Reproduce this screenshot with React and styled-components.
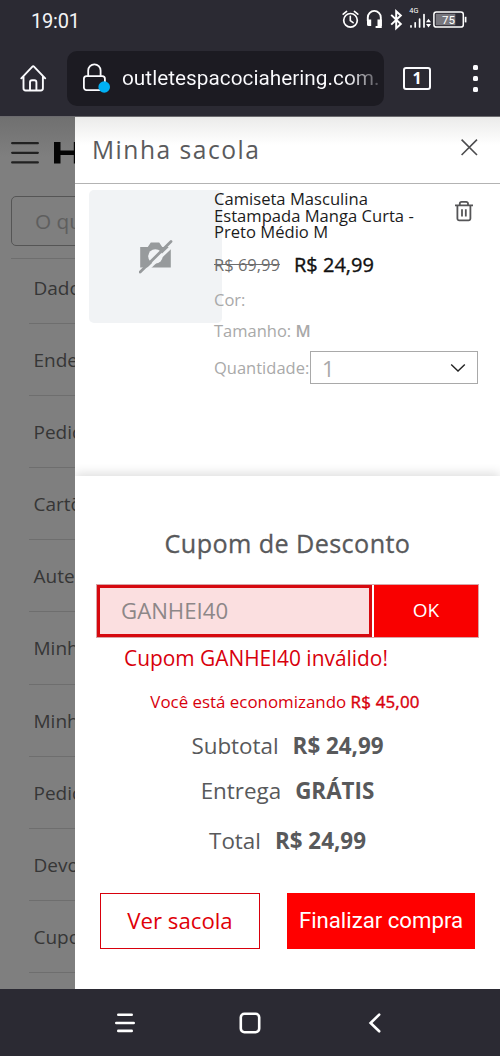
import React from "react"
import styled, { createGlobalStyle, css } from "styled-components"

const MENU = ["Dados", "Endereços", "Pedidos", "Cartões", "Autenticação", "Minha sacola", "Minhas listas", "Pedidos", "Devoluções", "Cupons"]

const TOTALS = [
  { label: "Subtotal", value: "R$ 24,99", height: 44 },
  { label: "Entrega", value: "GRÁTIS", height: 46 },
  { label: "Total", value: "R$ 24,99", height: 54 },
]

function StatusIcons() {
  return (
    <svg width="132" height="34" viewBox="340 4 132 34" fill="none" stroke="#fff" strokeLinecap="round">
      <circle cx="350.5" cy="20.3" r="6.8" strokeWidth="1.7" />
      <path d="M350.3 16.3v4.4l2.8 2M343.2 14.2l3.4-2.8M357.8 14.2l-3.4-2.8" strokeWidth="1.6" />
      <path d="M367.8 21v-3.6a6.5 6.5 0 0 1 13 0V27h-5.2" strokeWidth="1.9" strokeLinecap="butt" />
      <path d="M367 19.5h4.2v6.6h-2.6a1.6 1.6 0 0 1-1.6-1.6zM377.5 19.5h4.3v6.6h-4.3z" fill="#fff" stroke="none" />
      <path d="M391.2 14.9l9.6 9.2-4.6 4.2V11.2l4.6 4.2-9.6 9.2" strokeWidth="2" strokeLinecap="butt" strokeLinejoin="miter" />
      <path d="M411 25.8v1.2M415.2 22.8v4.2M419.6 19.2v7.8M424 14.6v12.4" strokeWidth="1.7" />
      <path d="M426 22.2l2.5-3.4 2.5 3.4zM426 24l2.5 3.4 2.5-3.4z" fill="#fff" stroke="none" />
      <rect x="433.9" y="11.9" width="29.4" height="15.2" rx="2.4" strokeWidth="1.5" />
      <rect x="435.8" y="13.8" width="19.5" height="11.4" fill="#77767d" stroke="none" />
      <path d="M465.6 16.8v5.6" strokeWidth="1.7" strokeLinecap="butt" />
      <text x="409.3" y="12.8" fill="#fff" stroke="none" fontSize="7.4" fontFamily="Roboto, sans-serif">4G</text>
      <text x="442" y="24" fill="#fff" stroke="none" fontSize="11.5" fontFamily="Roboto, sans-serif">75</text>
    </svg>
  )
}

function HomeIcon() {
  return (
    <svg width="28" height="28" viewBox="0 0 28 28" fill="none" stroke="#fbfbfe" strokeWidth="1.9" strokeLinecap="round" strokeLinejoin="round">
      <path d="M1.3 14.3L12.4 2.6a1.1 1.1 0 0 1 1.6 0l11.2 11.7M3.5 12.5v11.8a2.2 2.2 0 0 0 2.2 2.2h15a2.2 2.2 0 0 0 2.2-2.2V12.5M10 26.3v-8a2 2 0 0 1 2-2h2.4a2 2 0 0 1 2 2v8" />
    </svg>
  )
}

function LockIcon() {
  return (
    <svg width="30" height="32" viewBox="0 0 30 32" fill="none">
      <rect x="1.9" y="14.2" width="21" height="14" rx="2.6" stroke="#fbfbfe" strokeWidth="1.8" />
      <path d="M6.2 14V8.6a6.2 6.2 0 0 1 12.4 0V14" stroke="#fbfbfe" strokeWidth="1.8" />
      <circle cx="22.2" cy="25" r="5.8" fill="#00b0f4" />
    </svg>
  )
}

function NoPhotoIcon() {
  return (
    <svg width="34" height="34" viewBox="0 0 34 34">
      <path d="M1.2 7h7.6l3-4.6h8.4l3 4.6h8.6v20.5H1.2z" fill="#979a9c" />
      <circle cx="16.4" cy="16.4" r="7.2" fill="#f1f3f5" />
      <path d="M3.6 34.2L36 3.2" stroke="#f1f3f5" strokeWidth="3" />
      <path d="M1.2 32L32 1.6" stroke="#979a9c" strokeWidth="2.8" strokeLinecap="round" />
    </svg>
  )
}

function TrashIcon() {
  return (
    <svg width="20" height="22" viewBox="0 0 20 22" fill="none" stroke="#555557" strokeWidth="1.8">
      <path d="M1 5.4h18M3.4 5.4v13.2a1.8 1.8 0 0 0 1.8 1.8h9.4a1.8 1.8 0 0 0 1.8-1.8V5.4M5.8 5.2V3.6a1.8 1.8 0 0 1 1.8-1.8h4.6A1.8 1.8 0 0 1 14 3.6v1.6M8 9.2v7.2M11.8 9.2v7.2" />
    </svg>
  )
}

export default function App() {
  return (
    <Screen>
      <GlobalStyle />
      <StatusBar>
        <Clock>19:01</Clock>
        <StatusIcons />
      </StatusBar>
      <Toolbar>
        <HomeIcon />
        <AddressBar>
          <LockIcon />
          <Address>outletespacociahering.com.</Address>
        </AddressBar>
        <TabCount>1</TabCount>
        <More><i /><i /><i /></More>
      </Toolbar>
      <Content>
        <Account>
          <AccountTop>
            <svg width="64" height="24" viewBox="0 0 64 24">
              <path d="M1.2 2.2h25.6M1.2 11.8h25.6M1.2 21.4h25.6" stroke="#212121" strokeWidth="2.3" strokeLinecap="round" />
              <path d="M43 1h6.5v8.4h13.3V1H64v21.6h-1.2V14H49.5v8.6H43z" fill="#050505" />
            </svg>
          </AccountTop>
          <Search>O que você procura?</Search>
          <Menu>
            {MENU.map((item, i) => <MenuItem key={i}>{item}</MenuItem>)}
          </Menu>
        </Account>
        <Drawer>
          <DrawerHeader>
            <h2>Minha sacola</h2>
            <svg width="18" height="18" viewBox="0 0 18 18" stroke="#4c4c4e" strokeWidth="1.6">
              <path d="M1.6 1.6l15.4 15.4M17 1.6L1.6 17" />
            </svg>
          </DrawerHeader>
          <Product>
            <Thumb><NoPhotoIcon /></Thumb>
            <Details>
              <Name>Camiseta Masculina<br />Estampada Manga Curta -<br />Preto Médio M</Name>
              <Prices>
                <OldPrice>R$ 69,99</OldPrice>
                <Price>R$ 24,99</Price>
              </Prices>
              <Attribute>Cor:</Attribute>
              <Attribute>Tamanho: <b>M</b></Attribute>
              <Quantity>
                <span>Quantidade:</span>
                <Select>
                  1
                  <svg width="16" height="10" viewBox="0 0 16 10" fill="none" stroke="#222" strokeWidth="1.4">
                    <path d="M1.2 1.5L8 8l6.8-6.5" />
                  </svg>
                </Select>
              </Quantity>
            </Details>
            <TrashIcon />
          </Product>
          <Summary>
            <CouponTitle>Cupom de Desconto</CouponTitle>
            <Coupon>
              <CouponInput>GANHEI40</CouponInput>
              <CouponButton>OK</CouponButton>
            </Coupon>
            <CouponError>Cupom GANHEI40 inválido!</CouponError>
            <Saving>Você está economizando <b>R$ 45,00</b></Saving>
            {TOTALS.map(({ label, value, height }) =>
              <Total key={label} $height={height}>
                <span>{label}</span>
                <strong>{value}</strong>
              </Total>
            )}
            <Actions>
              <ViewBag>Ver sacola</ViewBag>
              <Checkout>Finalizar compra</Checkout>
            </Actions>
          </Summary>
        </Drawer>
      </Content>
      <NavBar>
        <svg width="22" height="22" viewBox="0 0 22 22" stroke="#fff" strokeWidth="2.6" strokeLinecap="round">
          <path d="M4.3 2.7h13.4M2.3 11h17.4M4.3 18.9h13.4" />
        </svg>
        <svg width="24" height="24" viewBox="0 0 24 24" fill="none" stroke="#fff" strokeWidth="2.6">
          <rect x="2.8" y="2.8" width="18.4" height="18.4" rx="3.6" />
        </svg>
        <svg width="22" height="22" viewBox="0 0 22 22" fill="none" stroke="#fff" strokeWidth="2.6" strokeLinecap="round">
          <path d="M15.2 2.6L6.6 11l8.6 8.3" />
        </svg>
      </NavBar>
    </Screen>
  )
}

const GlobalStyle = createGlobalStyle`
* {
    box-sizing: border-box;
}
body {
    margin: 0;
    font-family: "Open Sans", "Noto Sans", sans-serif;
}
h2, h3, p {
    margin: 0;
    font-weight: 400;
}
svg {
    flex-shrink: 0;
    display: block;
}
`
const Screen = styled.div`
width: 500px;
height: 1056px;
display: flex;
flex-direction: column;
overflow: hidden;
background: #2b2a33;
white-space: nowrap;
`
const StatusBar = styled.div`
height: 40px;
display: flex;
justify-content: space-between;
align-items: center;
padding: 2px 28px 0 31px;
font-family: Roboto, sans-serif;
`
const Clock = styled.span`
color: #f4f4f6;
font-size: 20px;
line-height: 24px;
letter-spacing: -0.2px;
`
const Toolbar = styled.div`
height: 76px;
display: flex;
align-items: center;
padding-left: 20px;
font-family: Roboto, sans-serif;
`
const AddressBar = styled.div`
width: 317px;
height: 55px;
margin-left: 19px;
padding-left: 15px;
display: flex;
align-items: center;
border-radius: 10px;
background: #1c1b22;
overflow: hidden;
`
const Address = styled.span`
margin-left: 10px;
font-size: 20.8px;
background: linear-gradient(90deg, #fbfbfe 225px, #34333b 262px);
background-clip: text;
color: transparent;
`
const TabCount = styled.div`
width: 28px;
height: 23px;
margin-left: 19px;
display: flex;
align-items: center;
justify-content: center;
border: 2px solid #fbfbfe;
border-radius: 3px;
color: #fbfbfe;
font-family: "Open Sans", sans-serif;
font-size: 16px;
font-weight: 700;
`
const More = styled.div`
margin-left: 42px;
display: flex;
flex-direction: column;
gap: 6px;
i {
    width: 5px;
    height: 5px;
    border-radius: 1.5px;
    background: #fbfbfe;
}
`
const Content = styled.div`
height: 873px;
display: flex;
border-top: 1px solid #6b6a6e;
`
const Account = styled.div`
width: 75px;
flex-shrink: 0;
overflow: hidden;
background: linear-gradient(#707070, #7f7f7f 40px);
`
const AccountTop = styled.div`
height: 79px;
padding: 24px 0 0 11px;
`
const Search = styled.div`
width: 478px;
height: 50px;
margin-left: 11px;
padding-left: 23px;
border: 1px solid #555;
border-radius: 5px;
color: #5e5e5e;
font-size: 20.8px;
line-height: 48px;
`
const Menu = styled.div`
width: 478px;
margin: 12px 0 0 11px;
padding-left: 18px;
border-top: 1px solid #6e6e6e;
`
const MenuItem = styled.div`
height: 72.2px;
padding-left: 4.5px;
border-bottom: 1px solid #6e6e6e;
color: #363636;
font-size: 19px;
line-height: 72px;
&:first-child {
    height: 64.6px;
    line-height: 58px;
}
`
const Drawer = styled.div`
flex: 1;
display: flex;
flex-direction: column;
background: #fff;
`
const DrawerHeader = styled.div`
height: 67px;
display: flex;
justify-content: space-between;
align-items: center;
padding: 0 22px 6px 17px;
border-bottom: 1px solid #b3b3b3;
background: linear-gradient(#ebebea, #fff 28px);
h2 {
    margin-top: 5px;
    color: #5a5a5c;
    font-size: 24.6px;
    letter-spacing: 1.5px;
}
`
const Product = styled.div`
height: 292px;
display: flex;
padding: 6px 26px 0 14px;
> svg {
    margin: 10px 0 0 auto;
}
`
const Thumb = styled.div`
width: 133px;
height: 133px;
margin-right: -8px;
flex-shrink: 0;
display: flex;
align-items: center;
justify-content: center;
border-radius: 5px;
background: #f1f3f5;
`
const Details = styled.div`
width: 240px;
color: #a9a9a9;
font-size: 16.5px;
`
const Name = styled.p`
padding-top: 1px;
color: #1c1c1c;
font-size: 16.6px;
line-height: 16.7px;
`
const Prices = styled.div`
height: 47px;
display: flex;
align-items: center;
`
const OldPrice = styled.span`
width: 80px;
color: #6d6d6d;
font-size: 16.5px;
text-decoration: line-through;
`
const Price = styled.span`
color: #111;
font-size: 20px;
-webkit-text-stroke: 0.35px #111;
`
const Attribute = styled.p`
height: 31px;
line-height: 24px;
b {
    font-weight: 600;
}
`
const Quantity = styled.div`
display: flex;
align-items: center;
width: 264px;
padding-top: 1px;
span {
    width: 96px;
}
`
const Select = styled.div`
width: 168px;
height: 33px;
display: flex;
justify-content: space-between;
align-items: center;
padding: 0 11px;
border: 1px solid #a9a9a9;
font-size: 22px;
`
const Summary = styled.div`
flex: 1;
padding: 50px 21px 0;
background: #fff;
box-shadow: 0 -3px 10px rgba(0, 0, 0, 0.13);
color: #58595b;
text-align: center;
clip-path: inset(-12px 0 0 0);
`
const CouponTitle = styled.h3`
font-size: 25.2px;
line-height: 34px;
letter-spacing: 0.4px;
-webkit-text-stroke: 0.3px #58595b;
`
const Coupon = styled.div`
display: flex;
justify-content: space-between;
height: 54px;
margin-top: 24px;
border: 1px solid #d9a5a8;
`
const CouponInput = styled.div`
width: 275px;
padding-left: 21px;
border: 3px solid #d6090f;
background: #fbdfe0;
color: #8d8788;
font-size: 22.2px;
line-height: 45px;
text-align: left;
`
const CouponButton = styled.div`
width: 104px;
background: #f90000;
color: #fff;
font-size: 19px;
line-height: 51px;
`
const CouponError = styled.p`
margin-top: 5px;
padding-left: 28px;
color: #d8000c;
font-size: 20.9px;
line-height: 30px;
text-align: left;
`
const Saving = styled.p`
margin: 17px 0 9px;
padding-right: 5px;
color: #d8000c;
font-size: 16.9px;
line-height: 24px;
b {
    font-weight: 400;
    letter-spacing: 0.2px;
    -webkit-text-stroke: 0.4px #d8000c;
}
`
const Total = styled.div`
height: ${props => props.$height}px;
display: flex;
justify-content: center;
align-items: center;
gap: 14px;
font-size: 22.4px;
strong {
    font-weight: 700;
}
`
const Actions = styled.div`
display: flex;
justify-content: space-between;
margin-top: 26px;
padding: 0 4px;
`
const button = css`
height: 56px;
font-size: 22.2px;
`
const ViewBag = styled.div`
${button}
width: 160px;
border: 1px solid #d8000c;
color: #e00008;
line-height: 54px;
`
const Checkout = styled.div`
${button}
width: 188px;
background: #ff0000;
color: #fff;
font-family: Roboto, sans-serif;
line-height: 55px;
`
const NavBar = styled.div`
flex: 1;
display: flex;
justify-content: space-between;
align-items: center;
padding: 0 114px;
`
